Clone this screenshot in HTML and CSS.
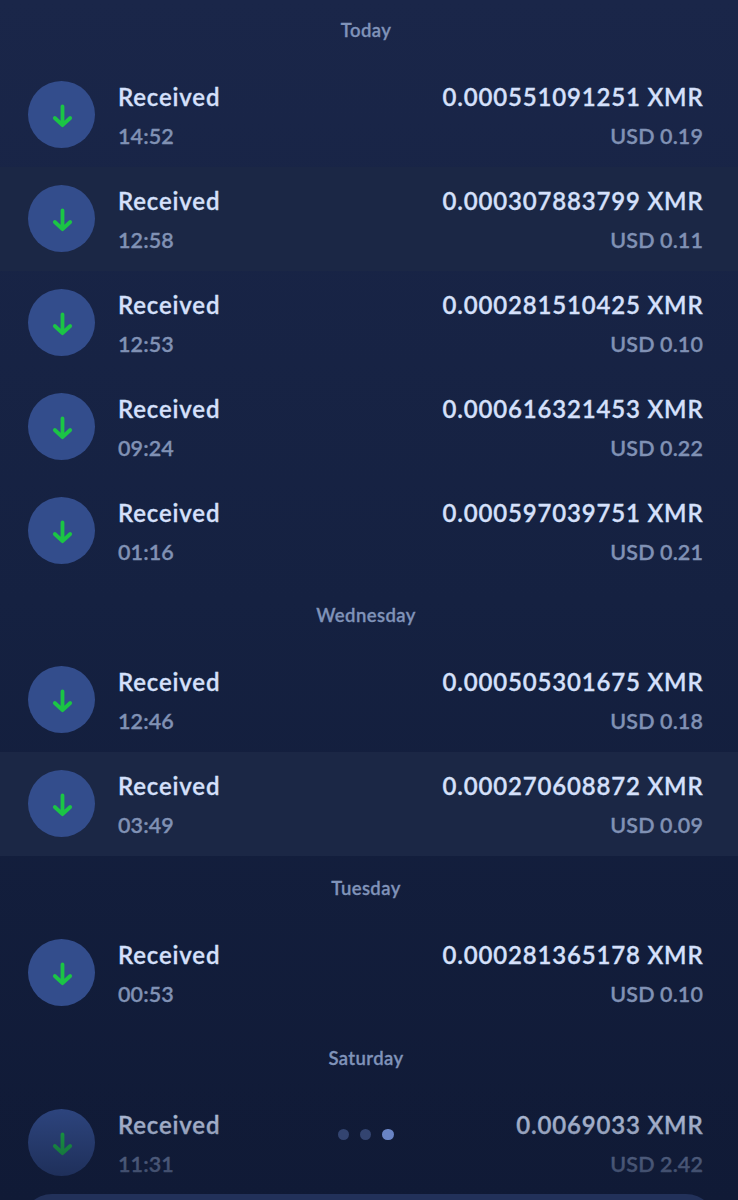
FILE: index.html
```html
<!DOCTYPE html>
<html lang="en">
<head>
<meta charset="utf-8">
<title>Transactions</title>
<link rel="stylesheet" href="styles.css">
</head>
<body>
<main class="screen">
<div class="list" id="list"></div>
<div class="fade"></div>
<div class="dots"><i class="dot"></i><i class="dot"></i><i class="dot active"></i></div>
<div class="sheet"></div>
</main>
<script src="app.js"></script>
</body>
</html>
```
FILE: styles.css
```css
* { box-sizing: border-box; }
body { margin: 0; background: #111a35; }
.screen {
  position: relative;
  width: 738px;
  height: 1200px;
  overflow: hidden;
  background: linear-gradient(#1a2649, #152141 50%, #101a36);
  font-family: "Lato Semibold", "Lato SemiBold", Lato, sans-serif;
  font-weight: 600;
  -webkit-text-stroke: 0.3px currentColor;
}
.day {
  height: 62.6px;
  padding: 0 6px 2px 0;
  display: flex;
  align-items: center;
  justify-content: center;
  font-size: 18.5px;
  letter-spacing: 0.4px;
  color: #8093b9;
}
.day.later { height: 65.2px; padding-bottom: 0; }
.row {
  height: 104px;
  padding: 3px 35px 0 28px;
  display: flex;
  align-items: center;
}
.row.tint { background: #1b2745; }
.badge {
  width: 67px;
  height: 67px;
  border-radius: 50%;
  background: #334d8c;
  margin: -3px 23px 0 0;
}
.badge svg { display: block; width: 67px; height: 67px; }
.left { flex: 1; }
.right { text-align: right; }
.main { padding-top: 1px; font-size: 24px; line-height: 30px; letter-spacing: 0.83px; color: #d5e0fb; }
.right .main { margin-right: -0.5px; }
.sub { margin-top: 9px; font-size: 21.5px; line-height: 30px; letter-spacing: 0.1px; color: #8091b4; }
.fade {
  position: absolute;
  inset: auto 0 0;
  height: 120px;
  background: linear-gradient(rgba(16, 26, 54, 0), rgba(16, 26, 54, 0.72));
}
.dots { position: absolute; left: 338px; top: 1129px; display: flex; gap: 11px; }
.dot { width: 11.2px; height: 11.2px; border-radius: 50%; background: #334470; }
.dot.active { background: #6984c5; }
.sheet {
  position: absolute;
  left: 22px;
  right: 22px;
  top: 1194px;
  height: 60px;
  border-radius: 40px;
  background: #22315a;
}
```
FILE: app.js
```js
const groups = [
  ["Today", [["14:52", "0.000551091251", "0.19"], ["12:58", "0.000307883799", "0.11", 1], ["12:53", "0.000281510425", "0.10"], ["09:24", "0.000616321453", "0.22"], ["01:16", "0.000597039751", "0.21"]]],
  ["Wednesday", [["12:46", "0.000505301675", "0.18"], ["03:49", "0.000270608872", "0.09", 1]]],
  ["Tuesday", [["00:53", "0.000281365178", "0.10"]]],
  ["Saturday", [["11:31", "0.0069033", "2.42"]]]
];
document.getElementById("list").innerHTML = groups.map(([day, rows], i) =>
  `<div class="day${i ? " later" : ""}">${day}</div>` + rows.map(([time, amount, usd, tint]) =>
  `<div class="row${tint ? " tint" : ""}">
    <div class="badge"><svg viewBox="0 0 67 67" fill="none" stroke="#1bc545" stroke-width="3.8" stroke-linecap="round" stroke-linejoin="round"><path d="M34.500 25.500v18.500M26.800 37l7.700 7.200 7.700-7.200"/></svg></div>
    <div class="left"><div class="main">Received</div><div class="sub">${time}</div></div>
    <div class="right"><div class="main">${amount} XMR</div><div class="sub">USD ${usd}</div></div>
  </div>`).join("")).join("");
```
